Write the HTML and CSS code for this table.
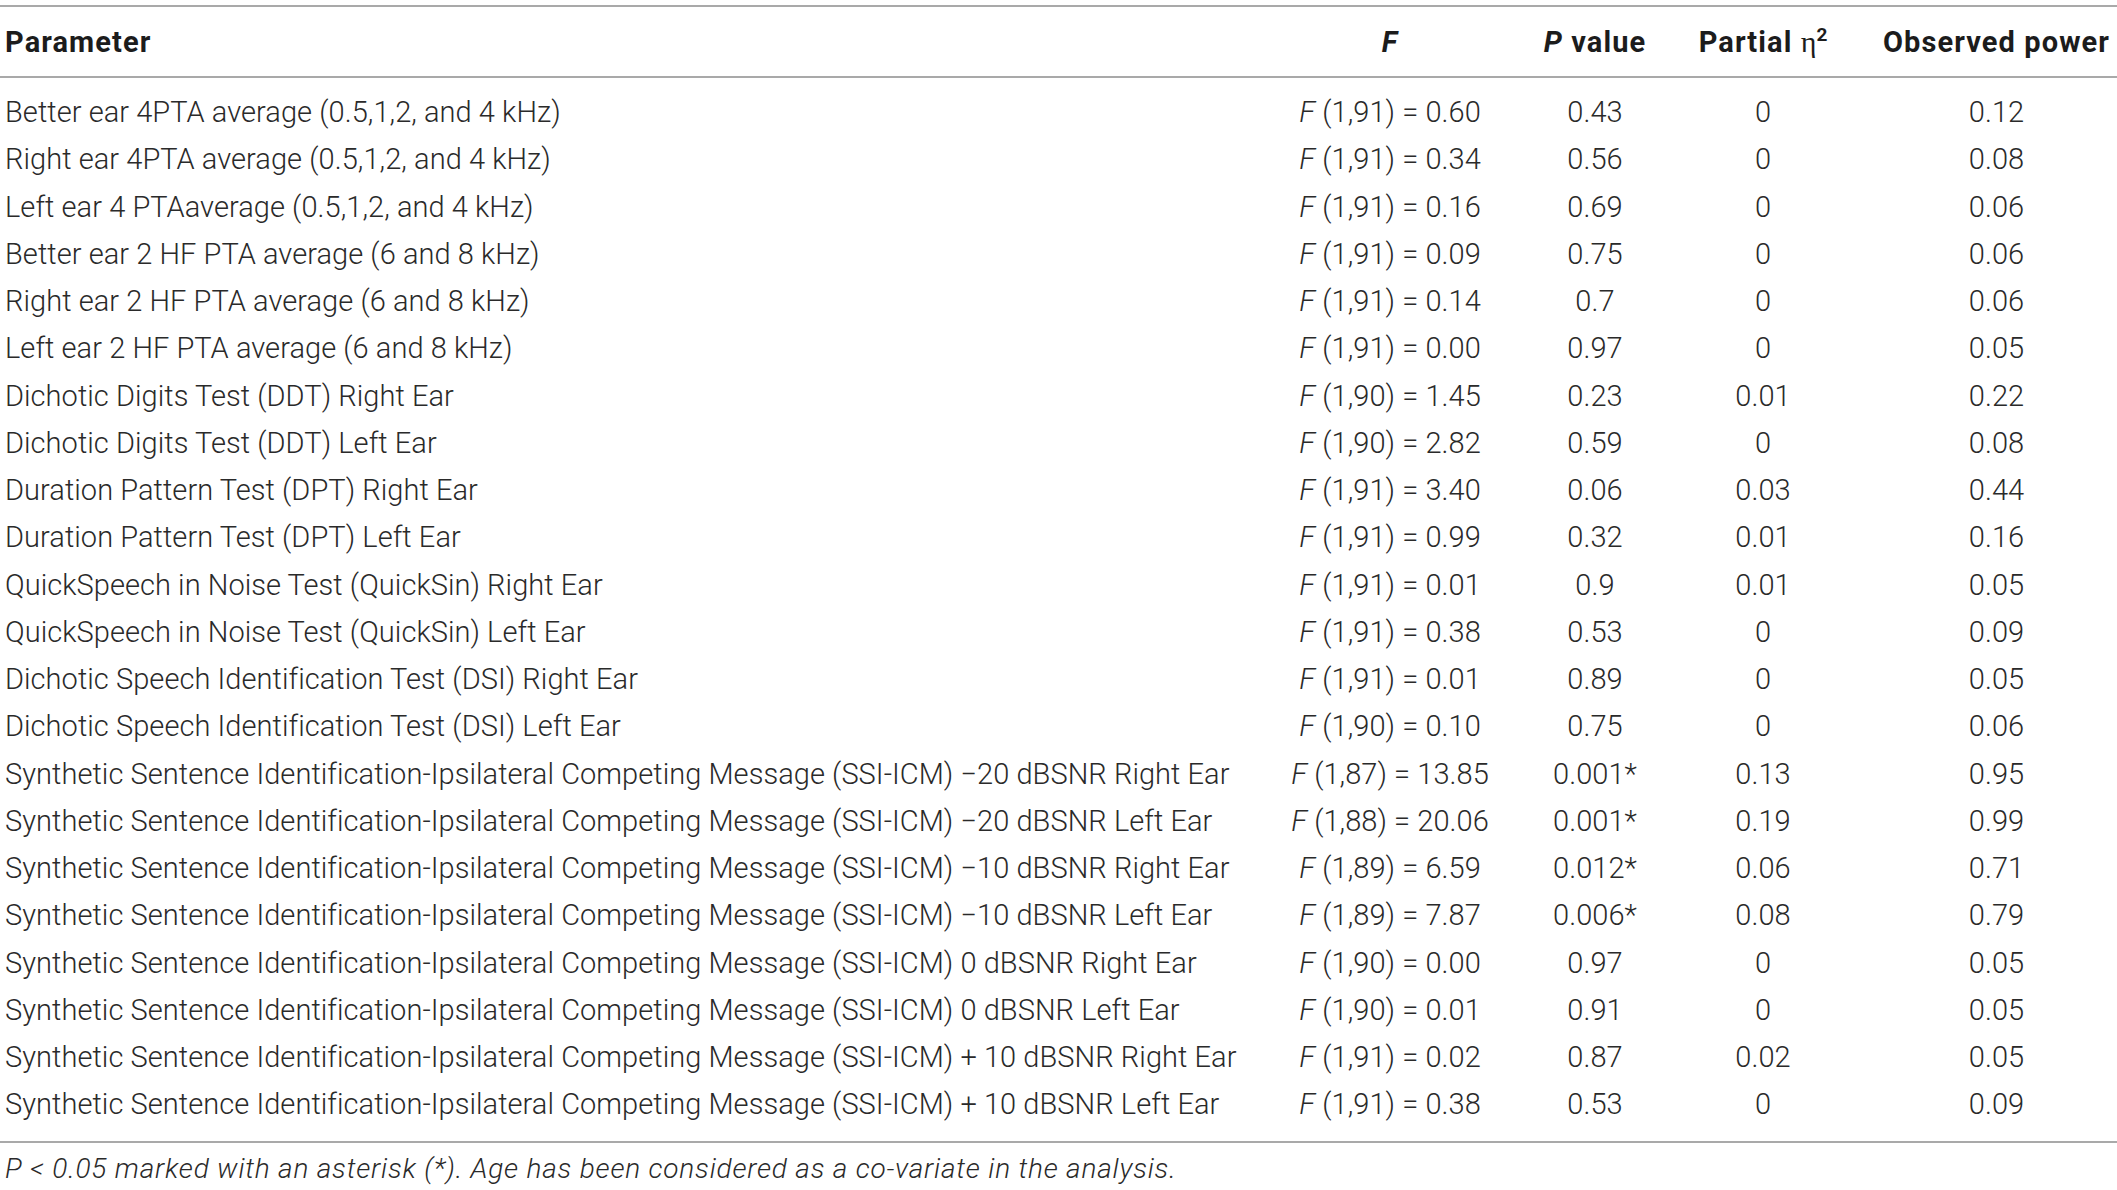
FILE: index.html
```html
<!DOCTYPE html>
<html lang="en">
<head>
<meta charset="utf-8">
<title>Table</title>
<link rel="stylesheet" href="styles.css">
</head>
<body>
<div class="table">
  <div class="row head">
    <div class="c param">Parameter</div>
    <div class="c"><i>F</i></div>
    <div class="c"><i>P</i> value</div>
    <div class="c">Partial <span class="eta">η</span><sup>2</sup></div>
    <div class="c">Observed power</div>
  </div>
  <div class="body">
    <div class="row"><div class="c param">Better ear 4PTA average (0.5,1,2, and 4 kHz)</div><div class="c"><i>F</i> (1,91) = 0.60</div><div class="c">0.43</div><div class="c">0</div><div class="c">0.12</div></div>
    <div class="row"><div class="c param">Right ear 4PTA average (0.5,1,2, and 4 kHz)</div><div class="c"><i>F</i> (1,91) = 0.34</div><div class="c">0.56</div><div class="c">0</div><div class="c">0.08</div></div>
    <div class="row"><div class="c param">Left ear 4 PTAaverage (0.5,1,2, and 4 kHz)</div><div class="c"><i>F</i> (1,91) = 0.16</div><div class="c">0.69</div><div class="c">0</div><div class="c">0.06</div></div>
    <div class="row"><div class="c param">Better ear 2 HF PTA average (6 and 8 kHz)</div><div class="c"><i>F</i> (1,91) = 0.09</div><div class="c">0.75</div><div class="c">0</div><div class="c">0.06</div></div>
    <div class="row"><div class="c param">Right ear 2 HF PTA average (6 and 8 kHz)</div><div class="c"><i>F</i> (1,91) = 0.14</div><div class="c">0.7</div><div class="c">0</div><div class="c">0.06</div></div>
    <div class="row"><div class="c param">Left ear 2 HF PTA average (6 and 8 kHz)</div><div class="c"><i>F</i> (1,91) = 0.00</div><div class="c">0.97</div><div class="c">0</div><div class="c">0.05</div></div>
    <div class="row"><div class="c param">Dichotic Digits Test (DDT) Right Ear</div><div class="c"><i>F</i> (1,90) = 1.45</div><div class="c">0.23</div><div class="c">0.01</div><div class="c">0.22</div></div>
    <div class="row"><div class="c param">Dichotic Digits Test (DDT) Left Ear</div><div class="c"><i>F</i> (1,90) = 2.82</div><div class="c">0.59</div><div class="c">0</div><div class="c">0.08</div></div>
    <div class="row"><div class="c param">Duration Pattern Test (DPT) Right Ear</div><div class="c"><i>F</i> (1,91) = 3.40</div><div class="c">0.06</div><div class="c">0.03</div><div class="c">0.44</div></div>
    <div class="row"><div class="c param">Duration Pattern Test (DPT) Left Ear</div><div class="c"><i>F</i> (1,91) = 0.99</div><div class="c">0.32</div><div class="c">0.01</div><div class="c">0.16</div></div>
    <div class="row"><div class="c param">QuickSpeech in Noise Test (QuickSin) Right Ear</div><div class="c"><i>F</i> (1,91) = 0.01</div><div class="c">0.9</div><div class="c">0.01</div><div class="c">0.05</div></div>
    <div class="row"><div class="c param">QuickSpeech in Noise Test (QuickSin) Left Ear</div><div class="c"><i>F</i> (1,91) = 0.38</div><div class="c">0.53</div><div class="c">0</div><div class="c">0.09</div></div>
    <div class="row"><div class="c param">Dichotic Speech Identification Test (DSI) Right Ear</div><div class="c"><i>F</i> (1,91) = 0.01</div><div class="c">0.89</div><div class="c">0</div><div class="c">0.05</div></div>
    <div class="row"><div class="c param">Dichotic Speech Identification Test (DSI) Left Ear</div><div class="c"><i>F</i> (1,90) = 0.10</div><div class="c">0.75</div><div class="c">0</div><div class="c">0.06</div></div>
    <div class="row"><div class="c param">Synthetic Sentence Identification-Ipsilateral Competing Message (SSI-ICM) −20 dBSNR Right Ear</div><div class="c"><i>F</i> (1,87) = 13.85</div><div class="c">0.001*</div><div class="c">0.13</div><div class="c">0.95</div></div>
    <div class="row"><div class="c param">Synthetic Sentence Identification-Ipsilateral Competing Message (SSI-ICM) −20 dBSNR Left Ear</div><div class="c"><i>F</i> (1,88) = 20.06</div><div class="c">0.001*</div><div class="c">0.19</div><div class="c">0.99</div></div>
    <div class="row"><div class="c param">Synthetic Sentence Identification-Ipsilateral Competing Message (SSI-ICM) −10 dBSNR Right Ear</div><div class="c"><i>F</i> (1,89) = 6.59</div><div class="c">0.012*</div><div class="c">0.06</div><div class="c">0.71</div></div>
    <div class="row"><div class="c param">Synthetic Sentence Identification-Ipsilateral Competing Message (SSI-ICM) −10 dBSNR Left Ear</div><div class="c"><i>F</i> (1,89) = 7.87</div><div class="c">0.006*</div><div class="c">0.08</div><div class="c">0.79</div></div>
    <div class="row"><div class="c param">Synthetic Sentence Identification-Ipsilateral Competing Message (SSI-ICM) 0 dBSNR Right Ear</div><div class="c"><i>F</i> (1,90) = 0.00</div><div class="c">0.97</div><div class="c">0</div><div class="c">0.05</div></div>
    <div class="row"><div class="c param">Synthetic Sentence Identification-Ipsilateral Competing Message (SSI-ICM) 0 dBSNR Left Ear</div><div class="c"><i>F</i> (1,90) = 0.01</div><div class="c">0.91</div><div class="c">0</div><div class="c">0.05</div></div>
    <div class="row"><div class="c param">Synthetic Sentence Identification-Ipsilateral Competing Message (SSI-ICM) + 10 dBSNR Right Ear</div><div class="c"><i>F</i> (1,91) = 0.02</div><div class="c">0.87</div><div class="c">0.02</div><div class="c">0.05</div></div>
    <div class="row"><div class="c param">Synthetic Sentence Identification-Ipsilateral Competing Message (SSI-ICM) + 10 dBSNR Left Ear</div><div class="c"><i>F</i> (1,91) = 0.38</div><div class="c">0.53</div><div class="c">0</div><div class="c">0.09</div></div>
  </div>
</div>
<p class="note"><i>P</i> &lt; 0.05 marked with an asterisk (*). Age has been considered as a co-variate in the analysis.</p>
</body>
</html>
```

FILE: styles.css
```css
html, body {
  margin: 0;
  padding: 0;
  background: #ffffff;
}

body {
  padding-top: 5px;
  font-family: Roboto, "Liberation Sans", Arial, sans-serif;
  font-weight: 300;
  color: #2a2a2a;
}

.table {
  width: 2117px;
  border-top: 2px solid #a9a9a9;
  border-bottom: 2px solid #a9a9a9;
}

.row {
  display: grid;
  grid-template-columns: 1240px 300px 110px 226px 1fr;
  font-size: 29px;
  letter-spacing: 0.05px;
  line-height: 47.25px;
  white-space: nowrap;
}

.c {
  text-align: center;
}

.c.param {
  text-align: left;
  padding-left: 5px;
}

.head {
  height: 69px;
  align-items: center;
  line-height: 34px;
  font-weight: 700;
  letter-spacing: 1.1px;
  color: #1c1c1c;
  border-bottom: 2px solid #a9a9a9;
}

.head sup {
  font-size: 19px;
  line-height: 0;
  vertical-align: 11px;
  letter-spacing: 0;
}

.eta {
  font-family: "Liberation Serif", "DejaVu Serif", serif;
  font-weight: 400;
  font-size: 30px;
  letter-spacing: 0;
}

.body {
  padding: 11px 0 12px;
}

.note {
  margin: 8px 0 0;
  padding-left: 5px;
  font-size: 28px;
  letter-spacing: 0.8px;
  line-height: 36px;
  font-style: italic;
  color: #2a2a2a;
}
```
